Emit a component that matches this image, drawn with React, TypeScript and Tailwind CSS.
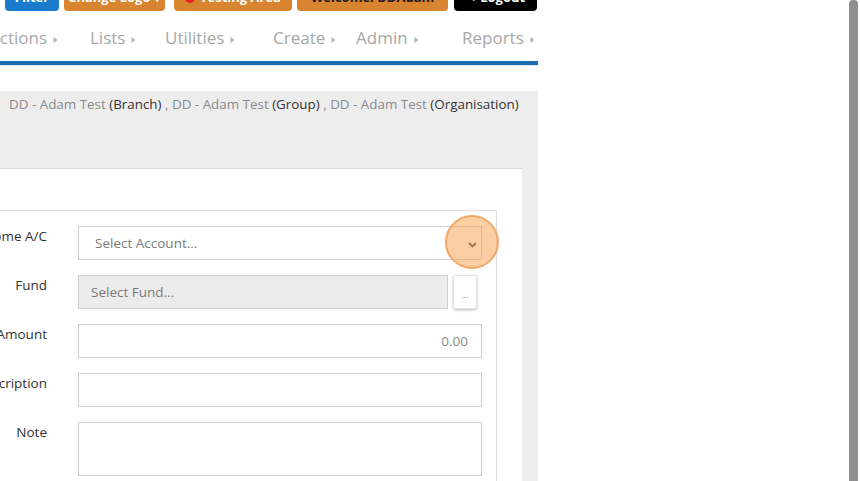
import React from "react";

const Caret = () => (
  <svg width="5" height="8" viewBox="0 0 5 8" className="ml-[6px] mt-[3px]">
    <path d="M0.5 1 L4.5 4 L0.5 7 Z" fill="#b3b3b3" />
  </svg>
);

const NavItem = ({ label, className = "" }: { label: string; className?: string }) => (
  <div className={"flex items-center shrink-0 " + className}>
    <span>{label}</span>
    <Caret />
  </div>
);

export default function App() {
  return (
    <div
      className="w-[860px] h-[481px] overflow-hidden bg-white flex"
      style={{ fontFamily: '"Open Sans", "Noto Sans", sans-serif' }}
    >
      <div className="w-[538px] shrink-0 flex flex-col overflow-hidden">
        {/* top buttons */}
        <div className="h-[11px] flex items-end shrink-0 text-[13px] font-bold leading-[18px]">
          <div className="ml-[5px] w-[54px] h-[30px] bg-[#1a7acb] rounded-b-[4px] text-white flex items-end justify-center pb-[5px]">Filter</div>
          <div className="ml-[5px] w-[101px] h-[30px] bg-[#d9842f] rounded-b-[4px] text-white flex items-end justify-center pb-[5px]">Change Logo ▾</div>
          <div className="ml-[9px] w-[118px] h-[30px] bg-[#d9842f] rounded-b-[4px] text-white flex items-end justify-center pb-[5px] gap-[5px]">
            <span className="w-[10px] h-[10px] rounded-full bg-[#e3201b] mb-[3px]"></span>Testing Area
          </div>
          <div className="ml-[5px] w-[151px] h-[30px] bg-[#d9842f] rounded-b-[4px] text-[#1a1a1a] flex items-end justify-center pb-[5px]">Welcome: DDAdam</div>
          <div className="ml-[6px] w-[83px] h-[30px] bg-black rounded-b-[4px] text-white flex items-end justify-center pb-[5px]">↪ Logout</div>
        </div>
        {/* nav */}
        <div className="h-[50px] shrink-0 flex items-center pt-[4px] text-[17px] text-[#a8a8a8] whitespace-nowrap">
          <NavItem label="Actions" className="ml-[-11px] w-[101px]" />
          <NavItem label="Lists" className="w-[75px]" />
          <NavItem label="Utilities" className="w-[108px]" />
          <NavItem label="Create" className="w-[83px]" />
          <NavItem label="Admin" className="w-[106px]" />
          <NavItem label="Reports" />
        </div>
        <div className="h-[4px] bg-[#1a6db0] shrink-0"></div>
        <div className="h-[1px] bg-[#dcecf6] shrink-0"></div>
        <div className="h-[25px] shrink-0"></div>
        {/* gray area */}
        <div className="flex-1 bg-[#eeedee] flex flex-col">
          <div className="h-[77px] shrink-0 pl-[9px] pt-[4px] text-[13.4px] leading-[18px] whitespace-nowrap">
            <span className="text-[#8a8a8a]">DD - Adam Test </span>
            <span className="text-[#333]">(Branch)</span>
            <span className="text-[#8a8a8a]"> , DD - Adam Test </span>
            <span className="text-[#333]">(Group)</span>
            <span className="text-[#8a8a8a]"> , DD - Adam Test </span>
            <span className="text-[#333]">(Organisation)</span>
          </div>
          <div className="flex-1 bg-white mr-[16px] ml-[-100px] border-t border-[#dcdcdc] pt-[41px]">
            <div className="mr-[25px] border border-[#dedede] border-b-0 h-full pt-[15px] pr-[14px] text-[13.5px]">
              <div className="grid grid-cols-[146px_1fr] gap-x-[31px] gap-y-[15px] text-[#333]">
                <div className="text-right leading-[20px] whitespace-nowrap">Income A/C</div>
                <div className="relative h-[34px] border border-[#cfcfcf] flex items-center pl-[16px] text-[#7a7a7a]">
                  Select Account...
                  <svg width="9" height="6" viewBox="0 0 9 6" className="absolute right-[4px] top-[15px]">
                    <path d="M1 1 L4.5 4.5 L8 1" stroke="#4a3020" strokeWidth="1.8" fill="none" />
                  </svg>
                  <div className="absolute left-[366px] top-[-12px] w-[54px] h-[54px] rounded-full bg-[#f7a55a]/55 border-2 border-[#f3a867]"></div>
                </div>

                <div className="text-right leading-[20px]">Fund</div>
                <div className="flex h-[34px]">
                  <div className="w-[370px] h-[34px] border border-[#cfcfcf] bg-[#ececec] flex items-center pl-[12px] text-[#7a7a7a]">Select Fund...</div>
                  <div className="ml-[5px] w-[24px] h-[34px] bg-white border border-[#e2e2e2] shadow-[0_1px_3px_rgba(0,0,0,0.25)] rounded-[2px] flex items-end justify-center pb-[9px] text-[9px] leading-[9px] text-[#888]">...</div>
                </div>

                <div className="text-right leading-[20px] whitespace-nowrap">Amount</div>
                <div className="h-[34px] border border-[#cfcfcf] flex items-center justify-end pr-[13px] text-[#8a8a8a]">0.00</div>

                <div className="text-right leading-[20px] whitespace-nowrap">Description</div>
                <div className="h-[34px] border border-[#cfcfcf]"></div>

                <div className="text-right leading-[20px]">Note</div>
                <div className="h-[54px] border border-[#cfcfcf]"></div>
              </div>
            </div>
          </div>
        </div>
      </div>
      <div className="flex-1"></div>
      <div className="w-[9px] h-full bg-[#8e8e8e] rounded-t-[4px] mr-[2px] shrink-0"></div>
    </div>
  );
}
